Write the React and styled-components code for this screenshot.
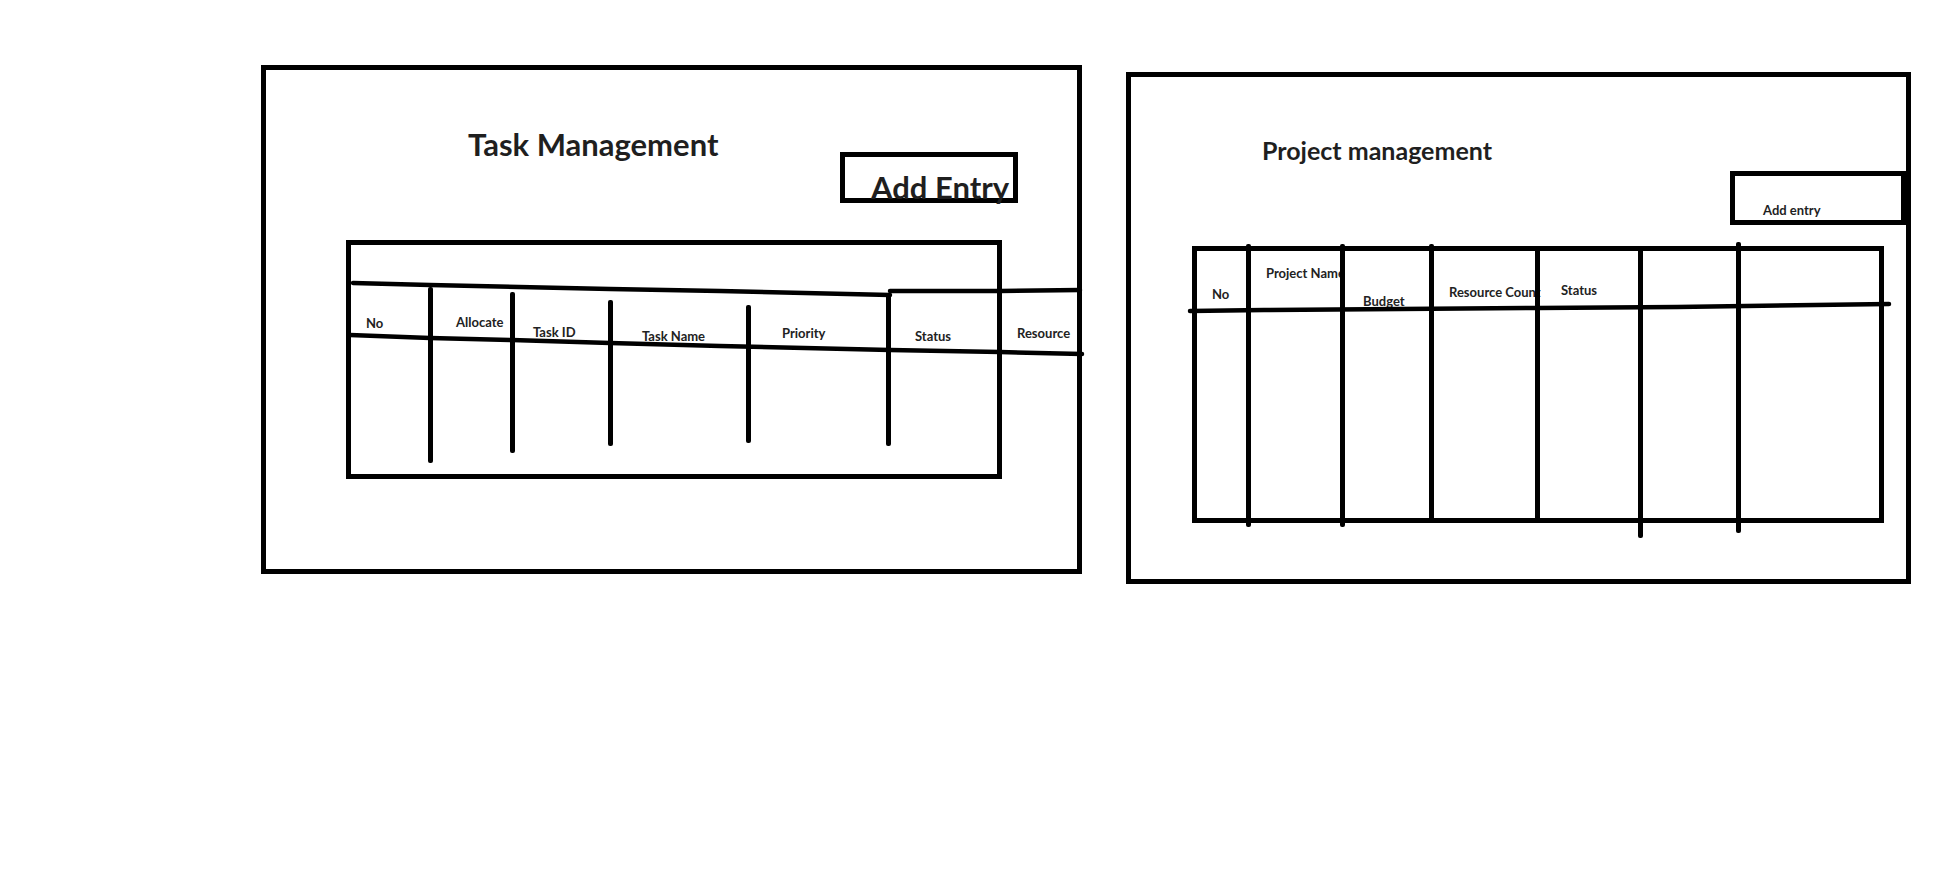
import React from "react";
import styled, { createGlobalStyle } from "styled-components";

const GlobalStyle = createGlobalStyle`
  html, body {
    margin: 0;
    background: #fff;
  }
  body {
    font-family: Lato, "Open Sans", sans-serif;
    color: #1f1f1f;
  }
`;

const Page = styled.div`
  display: flex;
  align-items: flex-start;
  gap: 44px;
  padding: 65px 0 0 261px;
  width: 1945px;
  height: 890px;
  box-sizing: border-box;
  overflow: hidden;
`;

const Card = styled.section`
  position: relative;
  box-sizing: border-box;
  width: ${(p) => p.$w}px;
  height: ${(p) => p.$h}px;
  margin-top: ${(p) => p.$top || 0}px;
  border: 5px solid #000;
  display: flex;
  flex-direction: column;
`;

const Header = styled.div`
  display: flex;
  align-items: flex-start;
  padding-top: ${(p) => p.$pt}px;
`;

const Title = styled.h1`
  margin: 0 0 0 ${(p) => p.$x}px;
  font-size: ${(p) => p.$size}px;
  line-height: ${(p) => p.$lh}px;
  font-weight: 700;
  white-space: nowrap;
`;

const AddButton = styled.button`
  box-sizing: border-box;
  display: flex;
  align-items: flex-start;
  margin: ${(p) => p.$top}px ${(p) => p.$right}px 0 auto;
  width: ${(p) => p.$w}px;
  height: ${(p) => p.$h}px;
  padding: ${(p) => p.$pt}px 0 0 ${(p) => p.$pl}px;
  border: 5px solid #000;
  background: #fff;
  color: #1f1f1f;
  font-family: inherit;
  font-weight: 700;
  font-size: ${(p) => p.$size}px;
  line-height: ${(p) => p.$lh}px;
  white-space: nowrap;
  overflow: visible;
  cursor: pointer;
`;

const TableRow = styled.div`
  display: flex;
  align-items: flex-start;
  margin: ${(p) => p.$top}px 0 0 ${(p) => p.$left}px;
`;

const TableBox = styled.div`
  box-sizing: border-box;
  display: flex;
  width: ${(p) => p.$w}px;
  height: ${(p) => p.$h}px;
  border: 5px solid #000;
`;

const Column = styled.div`
  flex: none;
  width: ${(p) => p.$w}px;
`;

const Label = styled.div`
  margin: ${(p) => p.$y}px 0 0 ${(p) => p.$x}px;
  font-size: 13px;
  line-height: 16px;
  font-weight: 700;
  color: #222;
  white-space: nowrap;
`;

const Divider = styled.div`
  position: relative;
  flex: none;
  width: 5px;
  border-radius: 2px;
  background: #000;
  margin-top: ${(p) => p.$mt}px;
  margin-bottom: ${(p) => p.$mb}px;
`;

const Strokes = styled.svg`
  position: absolute;
  left: 0;
  top: 0;
  width: 100%;
  height: 100%;
  overflow: visible;
  pointer-events: none;
`;

const Stroke = ({ points }) => (
  <polyline
    points={points}
    fill="none"
    stroke="#000"
    strokeWidth="4.5"
    strokeLinecap="round"
    strokeLinejoin="round"
  />
);

const taskColumns = [
  { w: 77, label: "No", x: 15, y: 70 },
  { w: 77, label: "Allocate", x: 23, y: 69, div: [42, 11] },
  { w: 93, label: "Task ID", x: 18, y: 79, div: [47, 21] },
  { w: 133, label: "Task Name", x: 29, y: 83, div: [55, 28] },
  { w: 135, label: "Priority", x: 31, y: 80, div: [60, 31] },
  { w: 106, label: "Status", x: 24, y: 83, div: [50, 28] },
];

const projectColumns = [
  { w: 49, label: "No", x: 15, y: 35 },
  { w: 89, label: "Project Name", x: 15, y: 14, div: [-7, -9] },
  { w: 84, label: "Budget", x: 18, y: 42, div: [-7, -9] },
  { w: 101, label: "Resource Count", x: 15, y: 33, div: [-7, -5] },
  { w: 98, label: "Status", x: 21, y: 31, div: [-5, -5] },
  { w: 93, div: [-5, -20] },
  { w: 138, div: [-9, -15] },
];

const Grid = ({ columns }) =>
  columns.map((c, i) => (
    <React.Fragment key={i}>
      {c.div && <Divider $mt={c.div[0]} $mb={c.div[1]} />}
      <Column $w={c.w}>{c.label && <Label $x={c.x} $y={c.y}>{c.label}</Label>}</Column>
    </React.Fragment>
  ));

const TaskCard = () => (
  <Card $w={821} $h={509}>
    <Header $pt={56}>
      <Title $x={202} $size={31} $lh={37}>
        Task Management
      </Title>
      <AddButton $top={26} $right={59} $w={178} $h={51} $pt={15} $pl={26} $size={31} $lh={31}>
        Add Entry
      </AddButton>
    </Header>
    <TableRow $top={37} $left={80}>
      <TableBox $w={656} $h={239}>
        <Grid columns={taskColumns} />
      </TableBox>
      <Label $x={15} $y={85}>
        Resource
      </Label>
    </TableRow>
    <Strokes>
      <Stroke points="87,213 164,215 344,219 454,221 624,225" />
      <Stroke points="624,221 734,221 814,220" />
      <Stroke points="84,265 164,268 246,270 344,273 454,276 624,280 734,282 816,284" />
    </Strokes>
  </Card>
);

const ProjectCard = () => (
  <Card $w={785} $h={512} $top={7}>
    <Header $pt={58}>
      <Title $x={131} $size={25} $lh={30}>
        Project management
      </Title>
      <AddButton $top={36} $right={0} $w={176} $h={54} $pt={26} $pl={28} $size={13} $lh={16}>
        Add entry
      </AddButton>
    </Header>
    <TableRow $top={21} $left={61}>
      <TableBox $w={692} $h={277}>
        <Grid columns={projectColumns} />
      </TableBox>
    </TableRow>
    <Strokes>
      <Stroke points="59,234 133,233 269,232 407,231 546,230 684,228 758,227" />
    </Strokes>
  </Card>
);

export default function App() {
  return (
    <>
      <GlobalStyle />
      <Page>
        <TaskCard />
        <ProjectCard />
      </Page>
    </>
  );
}
